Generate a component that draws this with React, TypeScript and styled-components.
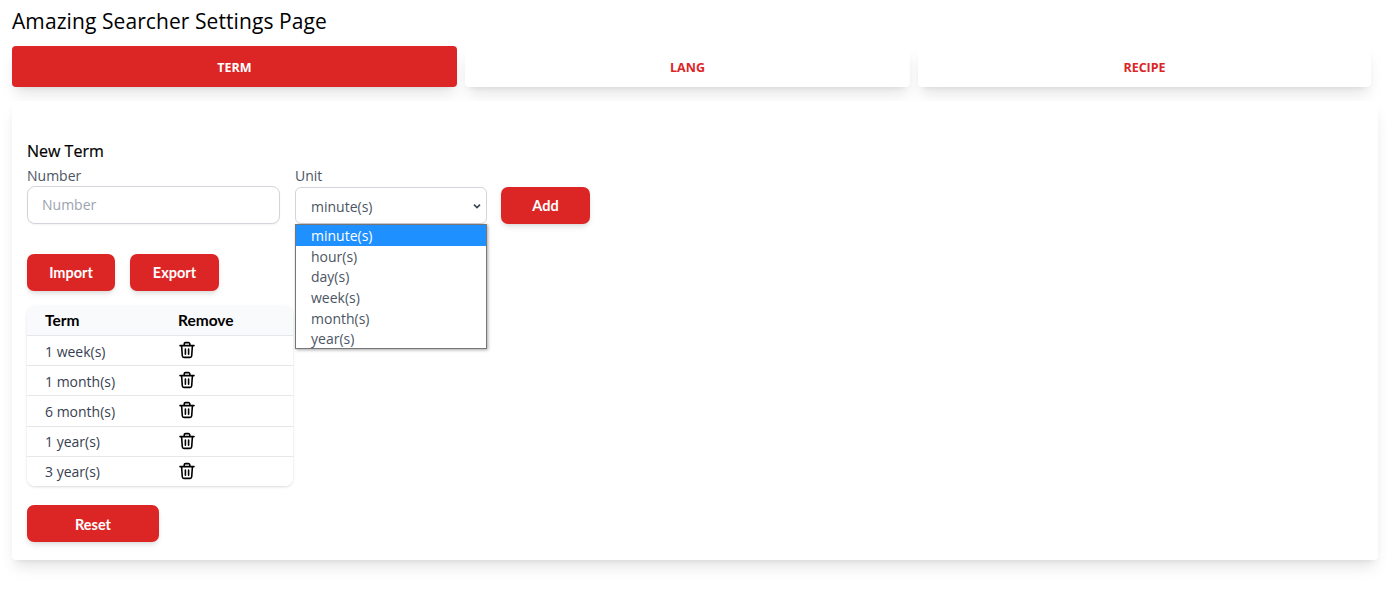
import React from 'react';
import styled, { createGlobalStyle } from 'styled-components';

const GlobalStyle = createGlobalStyle`
  html, body { margin: 0; padding: 0; background: #fff; }
  body { font-family: "Open Sans", "Noto Sans", sans-serif; color: #000; }
`;

const Page = styled.div`
  padding: 0 22px 29px 12px;
  display: flex;
  flex-direction: column;
`;

const Title = styled.h1`
  margin: 0;
  height: 46px;
  line-height: 43px;
  font-size: 21px;
  font-weight: 400;
  letter-spacing: 0.08px;
`;

const Tabs = styled.div`
  display: flex;
  gap: 8px;
  width: 1359px;
`;

const Tab = styled.button<{ $active?: boolean; $w: number }>`
  width: ${(p) => p.$w}px;
  height: 41px;
  padding: 1px 0 0;
  border: 0;
  border-radius: 4px;
  background: ${(p) => (p.$active ? '#dc2626' : '#fff')};
  color: ${(p) => (p.$active ? '#fff' : '#dc2626')};
  font-family: "Open Sans", sans-serif;
  font-size: 12.5px;
  font-weight: 700;
  box-shadow: 0 10px 15px -3px rgba(0, 0, 0, 0.1), 0 4px 6px -4px rgba(0, 0, 0, 0.1);
`;

const Card = styled.div`
  margin-top: 14px;
  width: 1336px;
  height: 406px;
  padding: 35px 15px 18px;
  border-radius: 4px;
  background: #fff;
  box-shadow: 0 10px 15px -3px rgba(0, 0, 0, 0.1), 0 4px 6px -4px rgba(0, 0, 0, 0.1);
  display: flex;
  flex-direction: column;
  align-items: flex-start;
`;

const SectionTitle = styled.h2`
  margin: 0;
  height: 32px;
  line-height: 30px;
  font-size: 16px;
  font-weight: 500;
  -webkit-text-stroke: 0.2px #000;
`;

const FormRow = styled.div`
  display: flex;
  align-items: flex-start;
`;

const Field = styled.div<{ $w: number; $mr: number }>`
  width: ${(p) => p.$w}px;
  margin-right: ${(p) => p.$mr}px;
  position: relative;
  display: flex;
  flex-direction: column;
`;

const FieldLabel = styled.label<{ $h: number }>`
  height: ${(p) => p.$h}px;
  line-height: 16px;
  font-size: 14px;
  color: #4b5563;
`;

const NumberInput = styled.input`
  box-sizing: border-box;
  width: 100%;
  height: 38px;
  padding: 0 14px;
  border: 1px solid #d1d5db;
  border-radius: 8px;
  font-family: "Open Sans", sans-serif;
  font-size: 14px;
  background: #fff;
  box-shadow: 0 1px 2px rgba(0, 0, 0, 0.05);
  &::placeholder { color: #9ca3af; opacity: 1; }
`;

const SelectBox = styled.div`
  box-sizing: border-box;
  width: 100%;
  height: 37px;
  padding: 2px 4px 0 15px;
  border: 1px solid #d1d5db;
  border-radius: 6px;
  display: flex;
  align-items: center;
  justify-content: space-between;
  font-size: 14px;
  color: #4b5563;
  background: #fff;
`;

const Popup = styled.ul`
  position: absolute;
  top: 56px;
  left: 0;
  box-sizing: border-box;
  width: 192px;
  height: 125px;
  margin: 0;
  padding: 0;
  list-style: none;
  background: #fff;
  border: 1px solid #767676;
  box-shadow: 1px 1px 3px rgba(0, 0, 0, 0.35);
  overflow: hidden;
  z-index: 5;
`;

const PopupItem = styled.li<{ $selected?: boolean }>`
  height: 20.7px;
  line-height: 21px;
  padding-left: 15px;
  font-size: 14px;
  color: ${(p) => (p.$selected ? '#fff' : '#4b5563')};
  background: ${(p) => (p.$selected ? '#1e90ff' : 'transparent')};
`;

const Button = styled.button<{ $w: number }>`
  width: ${(p) => p.$w}px;
  height: 37px;
  padding: 1px 0 0;
  border: 0;
  border-radius: 7px;
  background: #dc2626;
  color: #fff;
  font-family: Lato, sans-serif;
  font-size: 14.5px;
  font-weight: 700;
  box-shadow: 0 4px 6px -1px rgba(0, 0, 0, 0.1), 0 2px 4px -2px rgba(0, 0, 0, 0.1);
`;

const AddWrap = styled.div`
  margin-top: 19px;
`;

const ActionRow = styled.div`
  margin-top: 30px;
  display: flex;
  gap: 15px;
`;

const Table = styled.div`
  margin-top: 15px;
  width: 266px;
  border-radius: 8px;
  overflow: hidden;
  box-shadow: 0 1px 3px rgba(0, 0, 0, 0.12), 0 1px 2px -1px rgba(0, 0, 0, 0.1);
`;

const Row = styled.div<{ $head?: boolean }>`
  box-sizing: border-box;
  height: ${(p) => (p.$head ? 30 : 30.2)}px;
  display: grid;
  grid-template-columns: 133px 1fr;
  align-items: center;
  padding-left: 18px;
  font-size: 14px;
  background: ${(p) => (p.$head ? '#f9fafb' : '#fff')};
  border-bottom: 1px solid #e5e7eb;
  &:last-child { border-bottom: 0; height: 29.5px; }
`;

const HeadCell = styled.span`
  font-family: Lato, sans-serif;
  font-size: 15.5px;
  font-weight: 700;
  color: #000;
`;

const TermCell = styled.span`
  padding-top: 1px;
  color: #374151;
`;

const IconCell = styled.span`
  display: flex;
  align-items: center;
  height: 100%;
  padding: 0 0 1px 0;
  box-sizing: border-box;
`;

const ResetWrap = styled.div`
  margin-top: 19px;
`;

const TrashIcon = () => (
  <svg width="18" height="18" viewBox="0 0 18 18" fill="none" stroke="#000" strokeWidth="1.6" strokeLinecap="round" strokeLinejoin="round">
    <path d="M2 4.6h14" />
    <path d="M6.2 4.4V3a1.4 1.4 0 0 1 1.4-1.4h2.8A1.4 1.4 0 0 1 11.8 3v1.4" />
    <path d="M3.6 4.8l.7 10a1.7 1.7 0 0 0 1.7 1.6h6a1.7 1.7 0 0 0 1.7-1.6l.7-10" />
    <path d="M7.4 8v5.2M10.6 8v5.2" />
  </svg>
);

const Chevron = () => (
  <svg width="10" height="10" viewBox="0 0 10 10" fill="none" stroke="#374151" strokeWidth="1.5">
    <path d="M2 3.6L5 6.6l3-3" />
  </svg>
);

const UNITS = ['minute(s)', 'hour(s)', 'day(s)', 'week(s)', 'month(s)', 'year(s)'];
const TERMS = ['1 week(s)', '1 month(s)', '6 month(s)', '1 year(s)', '3 year(s)'];

export default function App() {
  return (
    <>
      <GlobalStyle />
      <Page>
        <Title>Amazing Searcher Settings Page</Title>
        <Tabs>
          <Tab $active $w={445}>TERM</Tab>
          <Tab $w={445}>LANG</Tab>
          <Tab $w={453}>RECIPE</Tab>
        </Tabs>
        <Card>
          <SectionTitle>New Term</SectionTitle>
          <FormRow>
            <Field $w={253} $mr={15}>
              <FieldLabel $h={18}>Number</FieldLabel>
              <NumberInput placeholder="Number" />
            </Field>
            <Field $w={192} $mr={14}>
              <FieldLabel $h={19}>Unit</FieldLabel>
              <SelectBox>
                minute(s)
                <Chevron />
              </SelectBox>
              <Popup>
                {UNITS.map((unit, i) => (
                  <PopupItem key={unit} $selected={i === 0}>{unit}</PopupItem>
                ))}
              </Popup>
            </Field>
            <AddWrap>
              <Button $w={89}>Add</Button>
            </AddWrap>
          </FormRow>
          <ActionRow>
            <Button $w={88}>Import</Button>
            <Button $w={89}>Export</Button>
          </ActionRow>
          <Table>
            <Row $head>
              <HeadCell>Term</HeadCell>
              <HeadCell>Remove</HeadCell>
            </Row>
            {TERMS.map((term) => (
              <Row key={term}>
                <TermCell>{term}</TermCell>
                <IconCell><TrashIcon /></IconCell>
              </Row>
            ))}
          </Table>
          <ResetWrap>
            <Button $w={132}>Reset</Button>
          </ResetWrap>
        </Card>
      </Page>
    </>
  );
}
